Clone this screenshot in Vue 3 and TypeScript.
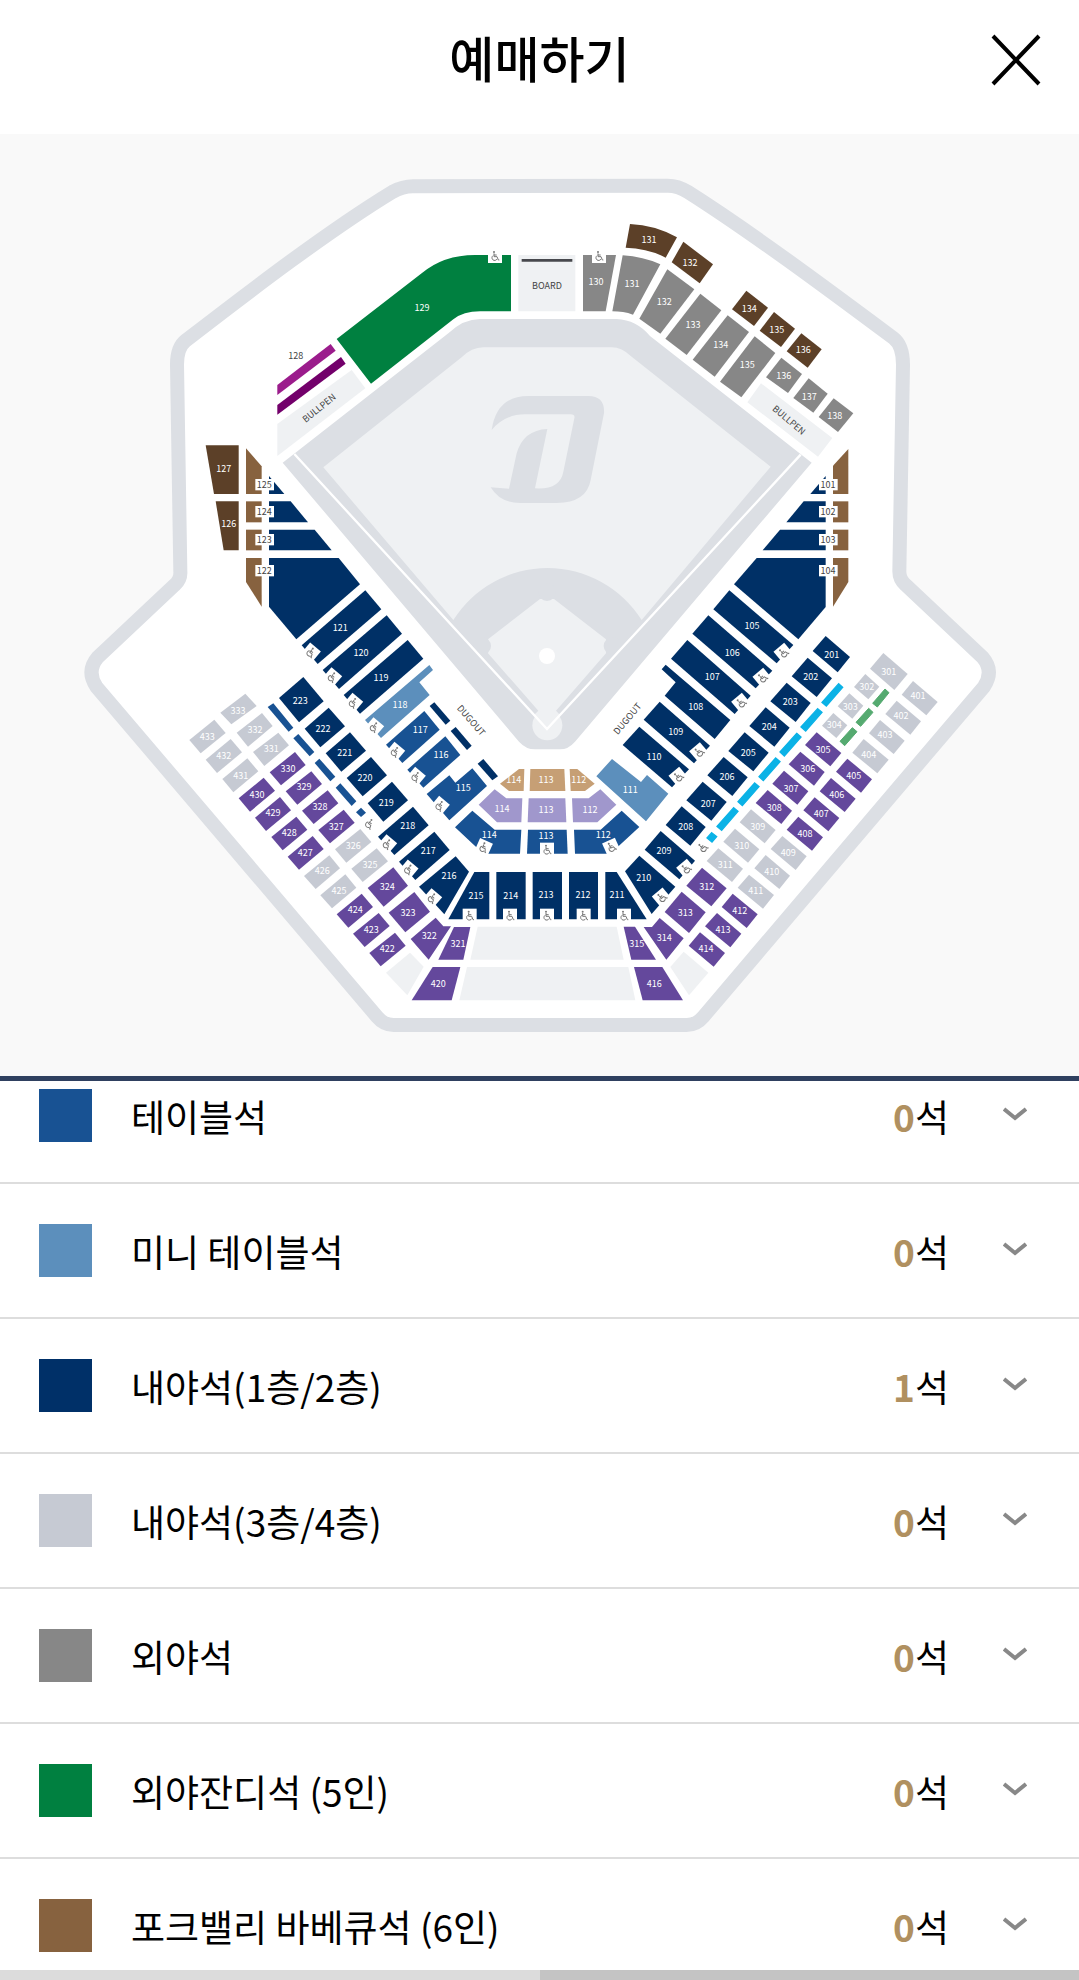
<script setup lang="ts">
import { ref } from 'vue'

type Tone =
  | 'navy' | 'table' | 'mini' | 'upper' | 'purple' | 'gray' | 'green' | 'bbq'
  | 'brown' | 'tan' | 'lilac' | 'cyan' | 'mint' | 'magenta' | 'plum' | 'empty'

// tone, outline, label, label centre x, label centre y
type Section = [Tone, string, string?, number?, number?]

interface Zone {
  id: string
  x: number
  y: number
  sections: Section[]
  // centre x, centre y, rotation
  accessible: [number, number, number][]
  // text, centre x, centre y
  tags: [string, number, number][]
}

interface Grade {
  id: string
  name: string
  color: string
  left: number
}

// Straight-edged blocks are stored as point lists, curved ones as full path data.
const outline = (d: string): string => (d.startsWith('M') ? d : `M${d}z`)

const zones: Zone[] = [
  {
    id: 'outfield-left', x: 540, y: 690,
    sections: [
      ['green', 'M470 327L725 130Q790 75 885 75H993V244H900Q850 244 820 268L573 461z', '129', 726, 232],
      ['magenta', '292,465 452,342 467,362 292,495'],
      ['plum', '292,525 483,381 497,401 292,554'],
      ['empty', '292,582 515,420 556,475 292,678'],
    ],
    accessible: [[945, 78, 0]],
    tags: [],
  },
  {
    id: 'outfield-right', x: 1620, y: 600,
    sections: [
      ['empty', '-65,165 106,165 106,334 -65,334'],
      ['gray', '129,165 228,165 197,334 129,334', '130', 168, 244],
      ['gray', 'M248 166Q310 170 361 193L279 344Q250 334 217 334z', '131', 276, 250],
      ['gray', '382,208 463,268 361,401 298,356', '132', 373, 305],
      ['gray', '481,281 544,331 440,465 376,416', '133', 459, 373],
      ['gray', '563,346 627,396 524,530 458,479', '134', 542, 433],
      ['gray', '644,409 706,459 604,592 540,545', '135', 622, 493],
      ['gray', '724,473 786,522 744,579 678,532', '136', 731, 527],
      ['gray', '806,535 863,581 820,638 760,594', '137', 808, 590],
      ['gray', '881,595 940,640 894,696 836,651', '138', 884, 647],
      ['brown', 'M270 72Q345 75 411 112L377 173Q325 145 257 143z', '131', 327, 119],
      ['brown', '430,125 519,193 479,250 395,187', '132', 450, 188],
      ['brown', '619,272 684,323 642,378 576,328', '134', 628, 325],
      ['brown', '702,336 765,386 723,441 659,392', '135', 710, 388],
      ['brown', '784,400 845,448 803,503 740,454', '136', 790, 449],
      ['empty', '663,550 877,714 834,770 622,607'],
    ],
    accessible: [[177, 168, 0]],
    tags: [],
  },
  {
    id: 'third-base', x: 540, y: 1290,
    sections: [
      ['brown', '77,46 176,46 176,192 102,192', '127', 131, 116],
      ['brown', '107,214 176,214 176,361 131,361', '126', 146, 281],
      ['bbq', '198,55 245,109 245,192 198,192'],
      ['bbq', '198,214 245,214 245,277 198,277'],
      ['bbq', '198,299 245,299 245,361 198,361'],
      ['bbq', '198,384 245,384 245,530 198,456'],
      ['navy', '267,138 313,192 267,192'],
      ['navy', '267,214 332,214 384,277 267,277'],
      ['navy', '267,299 404,299 455,361 267,361'],
      ['navy', '267,384 476,384 540,463 349,628 267,530'],
      ['navy', '556,481 604,538 413,702 365,646', '121', 481, 593],
      ['navy', '620,556 666,611 477,777 428,720', '120', 543, 668],
      ['navy', '683,630 730,686 540,851 491,795', '119', 603, 743],
    ],
    accessible: [[393, 667, 40], [457, 741, 40], [520, 818, 40]],
    tags: [['125', 253, 164], ['124', 253, 245], ['123', 253, 329], ['122', 253, 422]],
  },
  {
    id: 'first-base', x: 1980, y: 1290,
    sections: [
      ['bbq', '565,57 565,192 519,192 519,107'],
      ['bbq', '519,214 565,214 565,277 519,277'],
      ['bbq', '519,299 565,299 565,361 519,361'],
      ['bbq', '519,384 565,384 565,456 519,530'],
      ['navy', '497,138 497,192 451,192'],
      ['navy', '431,214 497,214 497,277 379,277'],
      ['navy', '360,299 497,299 497,361 308,361'],
      ['navy', '290,384 497,384 497,531 415,628 222,463'],
      ['navy', '208,481 400,645 350,700 160,538', '105', 276, 587],
      ['navy', '145,556 337,722 287,775 97,611', '106', 217, 668],
      ['navy', '82,630 272,797 224,852 33,686', '107', 157, 740],
      ['navy', '497,618 570,681 533,727 458,663', '201', 515, 674],
    ],
    accessible: [[370, 668, -40], [307, 743, -40], [243, 818, -40]],
    tags: [['101', 504, 164], ['102', 504, 245], ['103', 504, 329], ['104', 504, 422]],
  },
  {
    id: 'left-bank', x: 540, y: 1980,
    sections: [
      ['mini', '748,15 759,30 718,67 749,105 603,234 555,180', '118', 660, 134],
      ['table', '733,153 779,209 667,309 618,254', '117', 721, 209],
      ['table', '796,229 841,285 730,383 682,329', '116', 783, 284],
      ['table', '740,402 808,346 826,368 877,325 921,378 808,481', '115', 850, 383],
      ['navy', '763,127 811,182 797,194 749,138'],
      ['navy', '827,201 875,257 861,270 812,213'],
      ['navy', '370,51 431,124 357,187 297,114', '223', 361, 122],
      ['navy', '446,143 495,199 421,262 374,206', '222', 429, 206],
      ['navy', '510,217 558,272 484,335 437,280', '221', 494, 278],
      ['navy', '573,291 621,346 548,409 500,354', '220', 555, 353],
      ['navy', '636,365 684,421 610,485 563,430', '219', 619, 427],
      ['navy', '699,440 746,496 643,585 594,530', '218', 683, 497],
      ['navy', '763,515 809,570 706,660 657,605', '217', 745, 571],
      ['navy', '827,589 867,635 793,763 717,680', '216', 807, 647],
      ['table', '280,130 340,203 326,215 263,141'],
      ['table', '355,222 403,276 389,289 340,235'],
      ['table', '418,296 466,350 451,364 404,309'],
      ['table', '481,370 529,424 515,438 467,383'],
      ['table', '543,443 558,458 543,471 528,457'],
      ['upper', '196,101 230,138 154,193 121,158', '333', 174, 152],
      ['upper', '246,159 278,198 204,260 170,218', '332', 225, 208],
      ['upper', '295,218 327,256 253,318 219,276', '331', 274, 266],
      ['purple', '345,276 377,315 303,376 269,337', '330', 324, 326],
      ['purple', '394,334 426,372 352,434 317,394', '329', 372, 380],
      ['purple', '443,391 475,430 401,492 366,452', '328', 420, 440],
      ['purple', '491,449 524,488 450,550 415,510', '327', 469, 500],
      ['upper', '541,507 574,546 499,608 465,568', '326', 520, 556],
      ['upper', '590,565 624,604 548,666 514,626', '325', 570, 614],
      ['purple', '640,622 684,677 611,740 563,684', '324', 622, 680],
      ['purple', '703,696 750,755 676,817 626,758', '323', 684, 758],
      ['purple', '767,773 790,799 813,799 746,899 692,837', '322', 748, 827],
      ['purple', '822,801 871,801 850,899 775,899', '321', 834, 851],
      ['upper', '103,179 137,219 62,280 28,240', '433', 82, 229],
      ['upper', '152,237 186,277 111,339 77,299', '432', 131, 286],
      ['upper', '202,295 235,334 160,397 127,357', '431', 182, 346],
      ['purple', '251,353 285,392 210,455 176,415', '430', 231, 404],
      ['purple', '300,411 333,451 258,513 225,473', '429', 279, 458],
      ['purple', '349,470 382,509 308,571 274,531', '428', 328, 518],
      ['purple', '398,528 431,567 357,629 323,590', '427', 376, 578],
      ['upper', '448,586 480,625 407,687 372,648', '426', 427, 633],
      ['upper', '496,643 529,683 456,745 421,706', '425', 477, 692],
      ['purple', '545,701 579,741 505,803 470,763', '424', 526, 749],
      ['purple', '596,759 629,798 554,861 519,821', '423', 574, 809],
      ['purple', '645,818 677,857 602,919 568,879', '422', 622, 866],
      ['empty', '690,878 731,920 682,1006 618,938'],
      ['purple', '758,921 841,921 815,1021 695,1021', '420', 775, 970],
    ],
    accessible: [
      [583, 201, 40], [646, 275, 40], [708, 350, 40], [780, 437, 40],
      [569, 491, 40], [622, 552, 40], [686, 628, 40], [757, 714, 40],
    ],
    tags: [],
  },
  {
    id: 'right-bank', x: 1920, y: 1920,
    sections: [
      ['navy', '77,74 271,240 224,297 74,167 107,127 65,88', '108', 167, 200],
      ['navy', '59,185 210,317 162,370 11,239', '109', 107, 275],
      ['navy', '-2,260 147,388 96,442 -52,315', '110', 42, 350],
      ['navy', '503,53 576,115 530,171 455,109', '202', 512, 110],
      ['navy', '440,128 512,189 467,246 391,184', '203', 451, 184],
      ['navy', '377,202 449,263 403,320 328,258', '204', 388, 260],
      ['navy', '314,277 386,338 340,394 265,333', '205', 325, 338],
      ['navy', '251,351 323,412 277,468 202,406', '206', 261, 409],
      ['navy', '188,425 260,486 214,542 139,481', '207', 205, 490],
      ['navy', '125,499 197,561 151,617 77,555', '208', 137, 560],
      ['navy', '62,573 165,662 118,718 14,629', '209', 72, 631],
      ['navy', '-2,647 106,740 35,822 -45,694', '210', 11, 713],
      ['cyan', '596,131 608,142 559,198 546,187'],
      ['cyan', '533,206 546,217 497,273 483,261'],
      ['cyan', '470,280 483,291 433,348 420,336'],
      ['cyan', '407,354 420,365 370,422 357,410'],
      ['cyan', '344,429 357,440 307,497 294,485'],
      ['cyan', '281,503 294,514 245,571 231,559'],
      ['cyan', '215,578 230,590 216,606 201,594'],
      ['mint', '735,147 747,158 712,201 698,190'],
      ['mint', '686,205 699,217 662,259 648,247'],
      ['mint', '637,263 651,275 614,317 600,304'],
      ['upper', '730,39 803,102 763,150 690,86', '301', 746, 95],
      ['upper', '676,102 718,140 685,178 642,141', '302', 680, 139],
      ['upper', '628,160 670,197 637,236 593,199', '303', 631, 199],
      ['upper', '580,219 622,256 589,294 546,257', '304', 583, 254],
      ['purple', '530,277 604,339 571,379 495,315', '305', 549, 328],
      ['purple', '481,335 554,396 522,437 446,373', '306', 503, 385],
      ['purple', '432,392 505,454 472,494 397,431', '307', 453, 445],
      ['purple', '383,450 456,512 424,552 347,489', '308', 403, 503],
      ['upper', '333,508 407,570 374,610 299,547', '309', 353, 559],
      ['upper', '285,566 358,628 324,668 250,605', '310', 305, 616],
      ['upper', '235,625 309,686 276,726 200,663', '311', 256, 673],
      ['purple', '186,683 260,745 214,799 139,737', '312', 200, 740],
      ['purple', '125,755 197,817 147,879 74,816', '313', 136, 817],
      ['purple', '59,834 131,895 79,959 11,861 36,861', '314', 73, 892],
      ['upper', '819,123 893,186 859,226 785,164', '401', 834, 167],
      ['upper', '770,182 843,244 811,284 736,222', '402', 783, 226],
      ['upper', '720,240 794,302 761,342 687,280', '403', 735, 285],
      ['upper', '671,297 746,359 712,400 637,338', '404', 686, 343],
      ['purple', '622,356 696,418 663,458 588,395', '405', 641, 406],
      ['purple', '573,414 647,476 614,516 539,454', '406', 590, 463],
      ['purple', '524,472 598,534 565,574 490,511', '407', 544, 520],
      ['purple', '475,530 549,592 516,632 440,569', '408', 495, 580],
      ['upper', '427,588 500,649 467,690 392,627', '409', 445, 637],
      ['upper', '377,645 450,707 418,747 343,685', '410', 395, 694],
      ['upper', '327,704 402,765 369,806 293,743', '411', 347, 751],
      ['purple', '278,761 353,823 320,864 245,801', '412', 299, 811],
      ['purple', '231,819 304,881 271,922 195,859', '413', 249, 868],
      ['purple', '180,877 255,939 221,980 146,917', '414', 198, 925],
      ['empty', '131,935 205,998 147,1066 91,981'],
    ],
    accessible: [
      [177, 336, -40], [115, 410, -40], [188, 622, -40], [138, 686, -40], [65, 772, -40],
    ],
    tags: [],
  },
  {
    id: 'home', x: 1320, y: 1920,
    sections: [
      ['navy', '130,357 174,409 157,421 113,371'],
      ['tan', '237,387 253,387 251,453 207,453 180,431', '114', 221, 419],
      ['tan', '271,387 373,387 376,453 269,453', '113', 318, 419],
      ['tan', '389,387 412,387 464,431 435,453 392,453', '112', 416, 419],
      ['lilac', '164,448 199,475 247,475 244,547 171,547 116,494', '114', 186, 505],
      ['lilac', '266,475 376,475 379,547 263,547', '113', 318, 509],
      ['lilac', '396,475 446,475 481,448 529,494 472,547 399,547', '112', 450, 508],
      ['table', '97,512 164,569 244,569 240,641 130,641 45,562', '114', 148, 584],
      ['table', '264,569 380,569 383,641 261,641', '113', 318, 587],
      ['table', '402,569 482,569 545,512 598,561 511,641 405,641', '112', 490, 584],
      ['mini', '516,357 603,426 621,405 685,461 618,544 469,409', '111', 571, 449],
      ['navy', '103,696 148,696 148,838 25,838', '215', 108, 767],
      ['navy', '169,696 257,696 257,838 169,838', '214', 212, 767],
      ['navy', '278,696 366,696 366,838 278,838', '213', 318, 764],
      ['navy', '387,696 474,696 474,838 387,838', '212', 429, 764],
      ['navy', '496,696 530,696 620,838 496,838', '211', 531, 764],
      ['empty', '113,860 530,860 551,959 91,959'],
      ['empty', '81,981 565,981 586,1081 58,1081'],
      ['purple', '551,860 585,860 648,959 574,959', '315', 590, 911],
      ['purple', '582,981 667,981 729,1081 608,1081', '416', 643, 1031],
    ],
    accessible: [
      [131, 622, 24], [321, 629, 0], [514, 621, -24],
      [89, 827, 0], [210, 827, 0], [321, 827, 0], [431, 827, 0], [552, 827, 0],
    ],
    tags: [],
  },
]

const grades: Grade[] = [
  { id: 'table', name: '테이블석', color: '#185293', left: 0 },
  { id: 'mini', name: '미니 테이블석', color: '#5c8fbc', left: 0 },
  { id: 'infield-low', name: '내야석(1층/2층)', color: '#003068', left: 1 },
  { id: 'infield-high', name: '내야석(3층/4층)', color: '#c6cad3', left: 0 },
  { id: 'outfield', name: '외야석', color: '#878787', left: 0 },
  { id: 'lawn', name: '외야잔디석 (5인)', color: '#008040', left: 0 },
  { id: 'bbq', name: '포크밸리 바베큐석 (6인)', color: '#87623f', left: 0 },
]

const selected = ref<string | null>(null)
const select = (id: string): void => {
  selected.value = selected.value === id ? null : id
}
</script>

<template>
  <div class="booking">
    <header class="bar">
      <h1>예매하기</h1>
      <button class="close" type="button" aria-label="닫기">
        <svg viewBox="0 0 50 52" aria-hidden="true"><path d="M2 2L48 50M48 2L2 50" /></svg>
      </button>
    </header>

    <section class="map" aria-label="좌석 배치도">
      <svg class="stadium" viewBox="0 402 3237 2826">
        <path
          class="wall"
          d="M1239 559L2003 557Q2034 557 2064 576C2250 694 2480 865 2680 1014Q2709 1036 2709 1094L2698 1714Q2698 1738 2717 1755L2948 1972Q2983 2013 2952 2060L2110 3050Q2089 3075 2060 3075H1181Q1152 3075 1131 3050L289 2060Q258 2013 293 1972L524 1755Q543 1738 541 1714L531 1094Q531 1042 557 1022C760 865 990 690 1177 576Q1208 559 1239 559z"
        />

        <path class="ground" d="M1440 957H1850Q1910 960 1950 1008L2435 1388L1725 2225Q1705 2248 1680 2248H1605Q1578 2248 1557 2225L848 1388L1345 1000Q1390 957 1440 957z" />
        <path class="grass" d="M970 1402L1385 1072Q1415 1042 1450 1042H1835Q1865 1042 1895 1070L2312 1400L1925 1860A334 334 0 0 0 1360 1860z" />
        <g transform="translate(1200 1110)">
          <path class="ground" d="M275 180Q290 78 385 78H565Q615 78 612 130L572 330Q560 398 470 399H360Q300 399 272 352L327 356L350 250Q370 180 442 177L405 355Q480 360 490 305L523 145Q526 133 512 133H375Q315 133 275 180z" />
          <path class="grass" d="M420 687H462L618 808V850L468 1022L480 1035L442 1060L402 1035L415 1022L264 850V808z" />
          <circle class="ground" cx="441" cy="666" r="27" />
          <circle class="ground" cx="246" cy="828" r="27" />
          <circle class="ground" cx="638" cy="828" r="27" />
          <circle class="grass" cx="442" cy="1066" r="45" />
          <circle class="mound" cx="441" cy="858" r="24" />
          <path class="foul" d="M-317 252L441 1077L1202 254" />
        </g>

        <g v-for="zone in zones" :key="zone.id" :transform="`translate(${zone.x} ${zone.y})`">
          <template v-for="([tone, d, label, lx, ly], i) in zone.sections" :key="i">
            <path :class="tone" :d="outline(d)" />
            <text v-if="label" class="number" :x="lx" :y="(ly ?? 0) + 10">{{ label }}</text>
          </template>
          <g
            v-for="([x, y, turn], i) in zone.accessible"
            :key="`a${i}`"
            class="access"
            :transform="`translate(${x} ${y}) rotate(${turn})`"
          >
            <rect x="-21" y="-21" width="42" height="42" />
            <circle cx="-3" cy="-12" r="3" />
            <path d="M-3 -8V2H6L10 12H13M-3 -3H5M-6 -1A8 8 0 1 0 6 9" />
          </g>
          <g v-for="([text, x, y]) in zone.tags" :key="text">
            <rect class="plate" :x="x - 27" :y="y - 17" width="56" height="34" />
            <text class="number dark" :x="x" :y="y + 10">{{ text }}</text>
          </g>
        </g>

        <path class="screen" d="M1565 781H1717" />
        <text class="number dark" x="887" y="1077">128</text>
        <text class="place" x="1641" y="867">BOARD</text>
        <text class="place" transform="translate(957 1224) rotate(-39)" y="10">BULLPEN</text>
        <text class="place" transform="translate(2367 1260) rotate(40)" y="10">BULLPEN</text>
        <text class="place" transform="translate(1414 2161) rotate(49)" y="10">DUGOUT</text>
        <text class="place" transform="translate(1882 2156) rotate(-50)" y="10">DUGOUT</text>
      </svg>
    </section>

    <div class="list">
      <ul>
        <li v-for="grade in grades" :key="grade.id">
          <button
            class="grade"
            type="button"
            :aria-expanded="selected === grade.id"
            @click="select(grade.id)"
          >
            <span class="swatch" :style="{ backgroundColor: grade.color }"></span>
            <span class="name">{{ grade.name }}</span>
            <span class="count"><strong>{{ grade.left }}</strong>석</span>
            <svg class="chevron" viewBox="0 0 24 14" aria-hidden="true"><path d="M1 2L12 11L23 2" /></svg>
          </button>
        </li>
      </ul>
    </div>

    <div class="foot" aria-hidden="true"><span></span><span></span></div>
  </div>
</template>

<style>
body {
  background: #fff;
}
</style>

<style scoped>
.booking {
  display: flex;
  flex-direction: column;
  height: 100vh;
  color: #000;
  font-family: "Noto Sans CJK KR", "Noto Sans", sans-serif;
}

.bar {
  display: grid;
  grid-template-columns: 1fr auto 1fr;
  align-items: center;
  flex: none;
  height: 134px;
  padding: 0 38px 14px;
  box-sizing: border-box;
}

.bar h1 {
  grid-column: 2;
  margin: 0;
  padding-bottom: 6px;
  font-size: 49px;
  font-weight: 500;
  line-height: 64px;
}

.close {
  justify-self: end;
  width: 50px;
  height: 52px;
  padding: 0;
  border: 0;
  background: none;
}

.close svg {
  display: block;
  fill: none;
  stroke: #000;
  stroke-width: 4;
}

.map {
  flex: none;
  background: #f9f9f9;
  border-bottom: 5px solid #2f4060;
}

.stadium {
  display: block;
  width: 100%;
}

.wall {
  fill: #fff;
  stroke: #dcdfe4;
  stroke-width: 42;
}

.ground { fill: #dcdfe4; }
.grass { fill: #eff1f3; }
.mound { fill: #fff; }
.foul { fill: none; stroke: #fff; stroke-width: 7; }
.screen { fill: none; stroke: #47484d; stroke-width: 8; }

.navy { fill: #003066; }
.table { fill: #185293; }
.mini { fill: #5c8fbc; }
.upper { fill: #c6cad3; }
.purple { fill: #64489c; }
.gray { fill: #878787; }
.green { fill: #008040; }
.bbq { fill: #87623f; }
.brown { fill: #5c4028; }
.tan { fill: #c69f75; }
.lilac { fill: #a097cc; }
.cyan { fill: #0bb2e6; stroke: #0bb2e6; stroke-width: 4; }
.mint { fill: #55aa70; stroke: #55aa70; stroke-width: 3; }
.magenta { fill: #9b1c8c; }
.plum { fill: #73006b; }
.empty { fill: #eff1f3; }

.number,
.place {
  font-size: 27px;
  text-anchor: middle;
}

.number { fill: #fff; }
.number.dark,
.place { fill: #444; }
.plate { fill: #fff; }

.access rect { fill: #fff; }
.access circle { fill: #777; }
.access path { fill: none; stroke: #777; stroke-width: 3; }

.list {
  flex: 1 1 0;
  min-height: 0;
  overflow: hidden;
}

/* The list sits part-way through its scroll, under the map's edge. */
.list ul {
  margin: -32px 0 0;
  padding: 0;
  list-style: none;
}

.grade {
  display: flex;
  align-items: center;
  width: 100%;
  height: 135px;
  padding: 0 52px 0 39px;
  border: 0;
  border-bottom: 2px solid #ddd;
  background: #fff;
  color: #000;
  font: inherit;
  font-size: 37px;
  line-height: 54px;
  text-align: left;
}

.swatch {
  width: 53px;
  height: 53px;
}

.name {
  flex: 1;
  padding-left: 39px;
}

.count strong {
  color: #b09060;
  font-weight: 700;
}

.chevron {
  width: 24px;
  height: 14px;
  margin: 0 0 4px 54px;
  fill: none;
  stroke: #888;
  stroke-width: 4;
}

.foot {
  display: grid;
  grid-template-columns: 1fr 1fr;
  flex: none;
  height: 10px;
  background: #dcdcdc;
}

.foot span:last-child {
  background: #c4c4c4;
}
</style>
